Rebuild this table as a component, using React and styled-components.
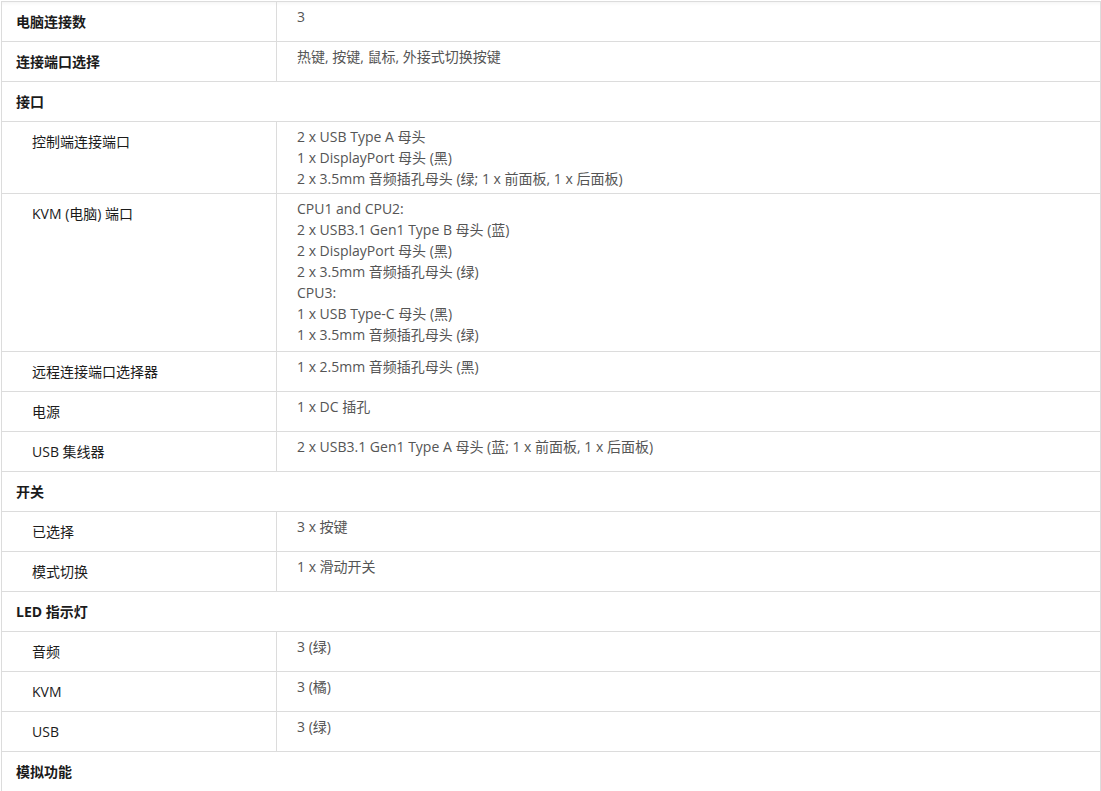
import React from "react";
import styled, { createGlobalStyle } from "styled-components";

const Global = createGlobalStyle`
  html, body { margin: 0; padding: 0; background: #fff; }
  body { font-family: "Open Sans", "Noto Sans CJK SC", sans-serif; }
`;

const Wrap = styled.div`
  padding: 1px 0 0 1px;
`;

const Table = styled.table`
  width: 1100px;
  border-collapse: separate;
  border-spacing: 0;
  border-top: 1px solid #dcdcdc;
  border-left: 1px solid #dcdcdc;
  box-shadow: inset 0 5px 5px -5px rgba(0, 0, 0, 0.08);
  table-layout: fixed;
  font-size: 14px;
  line-height: 21px;
`;

const Label = styled.td`
  width: 274px;
  box-sizing: border-box;
  padding: 9px 14px 9px ${(p) => (p.$sub ? 30 : 14)}px;
  vertical-align: top;
  color: #1b1b1b;
  font-weight: ${(p) => (p.$sub ? 400 : 700)};
  border-right: 1px solid #dcdcdc;
  border-bottom: 1px solid #dcdcdc;
`;

const Section = styled.td`
  padding: 9px 14px;
  vertical-align: top;
  color: #1b1b1b;
  font-weight: 700;
  border-right: 1px solid #dcdcdc;
  border-bottom: 1px solid #dcdcdc;
`;

const Value = styled.td`
  padding: 4px 19px ${(p) => (p.$extra ? 6 : 4)}px 20px;
  vertical-align: top;
  color: #555;
  border-right: 1px solid #dcdcdc;
  border-bottom: 1px solid #dcdcdc;
`;

const Line = styled.div`
  white-space: nowrap;
`;

const rows = [
  { label: "电脑连接数", value: ["3"] },
  { label: "连接端口选择", value: ["热键, 按键, 鼠标, 外接式切换按键"] },
  { section: "接口" },
  {
    label: "控制端连接端口",
    sub: true,
    value: [
      "2 x USB Type A 母头",
      "1 x DisplayPort 母头 (黑)",
      "2 x 3.5mm 音频插孔母头 (绿; 1 x 前面板, 1 x 后面板)",
    ],
  },
  {
    label: "KVM (电脑) 端口",
    sub: true,
    extra: true,
    value: [
      "CPU1 and CPU2:",
      "2 x USB3.1 Gen1 Type B 母头 (蓝)",
      "2 x DisplayPort 母头 (黑)",
      "2 x 3.5mm 音频插孔母头 (绿)",
      "CPU3:",
      "1 x USB Type-C 母头 (黑)",
      "1 x 3.5mm 音频插孔母头 (绿)",
    ],
  },
  { label: "远程连接端口选择器", sub: true, value: ["1 x 2.5mm 音频插孔母头 (黑)"] },
  { label: "电源", sub: true, value: ["1 x DC 插孔"] },
  {
    label: "USB 集线器",
    sub: true,
    value: ["2 x USB3.1 Gen1 Type A 母头 (蓝; 1 x 前面板, 1 x 后面板)"],
  },
  { section: "开关" },
  { label: "已选择", sub: true, value: ["3 x 按键"] },
  { label: "模式切换", sub: true, value: ["1 x 滑动开关"] },
  { section: "LED 指示灯" },
  { label: "音频", sub: true, value: ["3 (绿)"] },
  { label: "KVM", sub: true, value: ["3 (橘)"] },
  { label: "USB", sub: true, value: ["3 (绿)"] },
  { section: "模拟功能" },
];

export default function App() {
  return (
    <>
      <Global />
      <Wrap>
        <Table>
          <colgroup>
            <col style={{ width: 275 }} />
            <col />
          </colgroup>
          <tbody>
            {rows.map((r, i) =>
              r.section ? (
                <tr key={i}>
                  <Section colSpan={2}>{r.section}</Section>
                </tr>
              ) : (
                <tr key={i}>
                  <Label $sub={r.sub}>{r.label}</Label>
                  <Value $extra={r.extra}>
                    {r.value.map((v, j) => (
                      <Line key={j}>{v}</Line>
                    ))}
                  </Value>
                </tr>
              )
            )}
          </tbody>
        </Table>
      </Wrap>
    </>
  );
}
